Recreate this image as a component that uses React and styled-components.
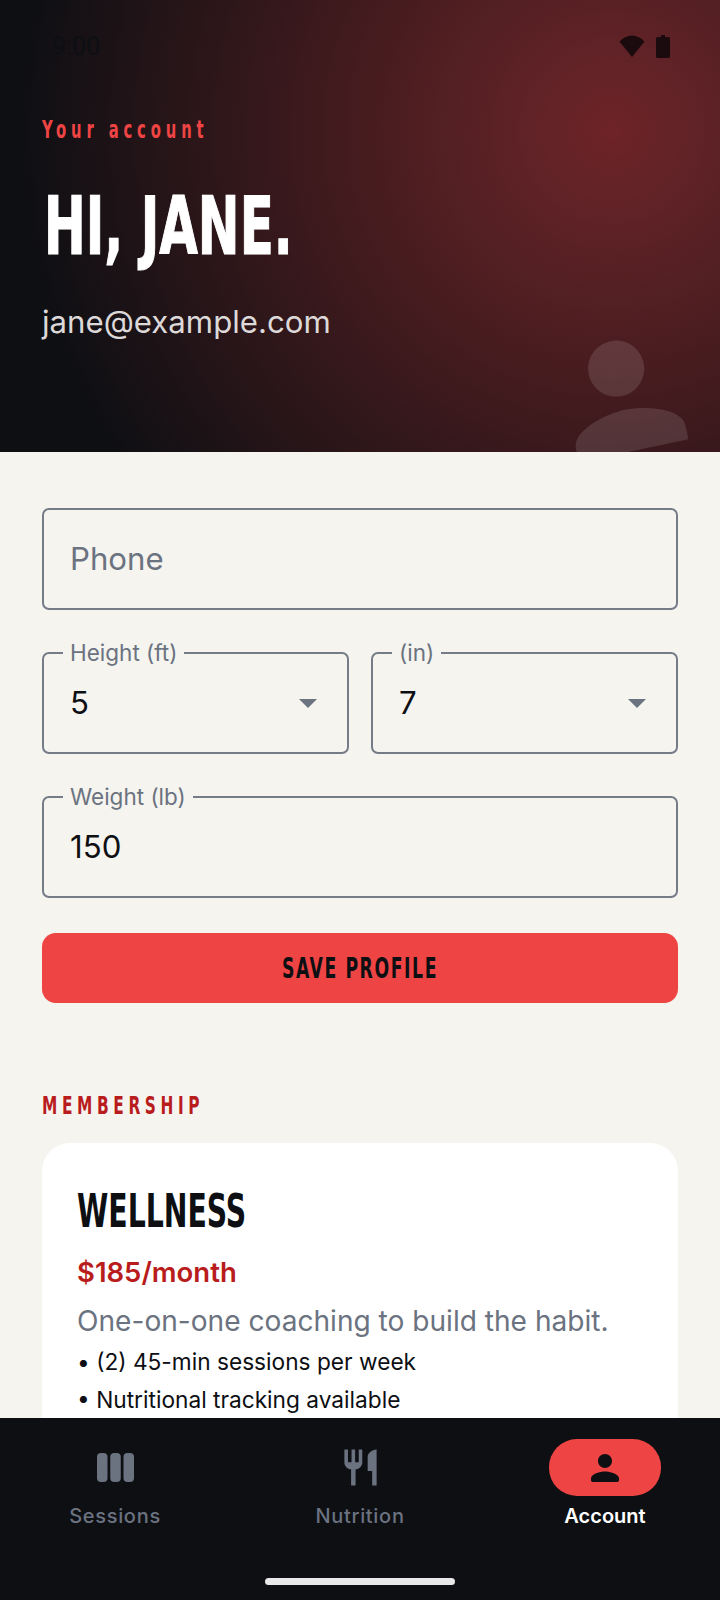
import React from "react";
import styled, { createGlobalStyle, css } from "styled-components";

// no Oswald here, so squeeze the condensed bold to the same proportions
const display = css`
  font-family: "DejaVu Sans Condensed", "DejaVu Sans", sans-serif;
  font-weight: 700;
  transform: scaleX(0.685);
  transform-origin: left center;
`;

const App = () => {
  return (
    <Screen>
      <GlobalStyle />
      <Scroller>
        <Hero>
          <Watermark viewBox="0 0 24 24">
            <path d="M12 12c2.210 0 4-1.790 4-4s-1.790-4-4-4-4 1.790-4 4 1.790 4 4 4zm0 2c-2.670 0-8 1.340-8 4v2h16v-2c0-2.660-5.330-4-8-4z" />
          </Watermark>
          <StatusBar>
            <Clock>9:00</Clock>
            <StatusIcons>
              <svg width="26" height="22" viewBox="0 0 26 22">
                <path d="M13 22 0.5 6.500C4 3 8.200 0.600 13 0.600S22 3 25.500 6.500z" />
              </svg>
              <svg width="14" height="23" viewBox="0 0 14 23">
                <path d="M5 0h4v2h3.500c.8 0 1.500.7 1.500 1.500V21.500c0 .8-.7 1.500-1.500 1.500h-11C.7 23 0 22.300 0 21.500V3.500C0 2.700.7 2 1.500 2H5z" />
              </svg>
            </StatusIcons>
          </StatusBar>
          <Eyebrow>Your account</Eyebrow>
          <Greeting>HI, JANE.</Greeting>
          <Email>jane@example.com</Email>
        </Hero>

        <Content>
          <Form>
            <Field>
              <Value $placeholder>Phone</Value>
            </Field>
            <TwoCols>
              <Field>
                <FieldLabel>Height (ft)</FieldLabel>
                <Value>5</Value>
                <Caret />
              </Field>
              <Field>
                <FieldLabel>(in)</FieldLabel>
                <Value>7</Value>
                <Caret />
              </Field>
            </TwoCols>
            <Field>
              <FieldLabel>Weight (lb)</FieldLabel>
              <Value>150</Value>
            </Field>
            <SaveButton>
              <span>SAVE PROFILE</span>
            </SaveButton>
          </Form>

          <SectionTitle>MEMBERSHIP</SectionTitle>
          <Card>
            <PlanName>WELLNESS</PlanName>
            <Price>$185/month</Price>
            <Blurb>One-on-one coaching to build the habit.</Blurb>
            <Perk>• (2) 45-min sessions per week</Perk>
            <Perk>• Nutritional tracking available</Perk>
          </Card>
        </Content>
      </Scroller>

      <BottomNav>
        <Tabs>
          <Tab>
            <IconSlot>
              <svg width="37" height="29" viewBox="0 0 37 29">
                <rect x="0" y="0" width="10.500" height="29" rx="4" />
                <rect x="13.250" y="0" width="10.500" height="29" rx="4" />
                <rect x="26.500" y="0" width="10.500" height="29" rx="4" />
              </svg>
            </IconSlot>
            <TabLabel>Sessions</TabLabel>
          </Tab>
          <Tab>
            <IconSlot>
              <svg width="43" height="43" viewBox="0 0 24 24">
                <path d="M11 9H9V2H7v7H5V2H3v7c0 2.120 1.660 3.840 3.750 3.970V22h2.500v-9.030C11.340 12.840 13 11.120 13 9V2h-2v7zm5-3v8h2.500v8H21V2c-2.760 0-5 2.240-5 4z" />
              </svg>
            </IconSlot>
            <TabLabel>Nutrition</TabLabel>
          </Tab>
          <Tab $active>
            <IconSlot $active>
              <svg width="42" height="42" viewBox="0 0 24 24">
                <path d="M12 12c2.210 0 4-1.790 4-4s-1.790-4-4-4-4 1.790-4 4 1.790 4 4 4zm0 2c-2.670 0-8 1.340-8 4v1c0 .550.450 1 1 1h14c.550 0 1-.450 1-1v-1c0-2.660-5.330-4-8-4z" />
              </svg>
            </IconSlot>
            <TabLabel $active>Account</TabLabel>
          </Tab>
        </Tabs>
        <HomeBar />
      </BottomNav>
    </Screen>
  );
};

const GlobalStyle = createGlobalStyle`
  html, body {
    margin: 0;
    padding: 0;
    background: #f5f4ef;
  }
  * {
    box-sizing: border-box;
  }
`;

const Screen = styled.div`
  width: 720px;
  height: 1600px;
  display: flex;
  flex-direction: column;
  overflow: hidden;
  font-family: Inter, sans-serif;
  background: #f5f4ef;
`;

const Scroller = styled.div`
  flex: 1;
  min-height: 0;
  overflow: hidden;
`;

//
//Header Area
//
const Hero = styled.header`
  position: relative;
  height: 452px;
  overflow: hidden;
  background: radial-gradient(
    circle 600px at 85% 29%,
    #6e2328 0%,
    #622327 12%,
    #431b1e 45%,
    #0d0f13 100%
  );
`;

const Watermark = styled.svg`
  position: absolute;
  right: 14px;
  bottom: -28px;
  width: 168px;
  height: 168px;
  transform: rotate(-12deg);
  fill: rgba(255, 255, 255, 0.12);
`;

const StatusBar = styled.div`
  height: 92px;
  padding: 0 50px 0 52px;
  display: flex;
  align-items: center;
  justify-content: space-between;
`;

const Clock = styled.span`
  font-family: Roboto, sans-serif;
  font-size: 25px;
  color: #0d0f13;
`;

const StatusIcons = styled.div`
  display: flex;
  align-items: center;
  gap: 11px;

  svg {
    fill: #1c0b0e;
  }
`;

const Eyebrow = styled.div`
  ${display}
  margin: 23px 0 0 42px;
  font-size: 24px;
  line-height: 30px;
  letter-spacing: 7.100px;
  color: #ef4444;
`;

const Greeting = styled.h1`
  ${display}
  margin: 31px 0 0 44px;
  font-size: 81px;
  line-height: 100px;
  color: #fff;
  -webkit-text-stroke: 1.200px #fff;
`;

const Email = styled.div`
  margin: 26px 0 0 42px;
  font-size: 31.200px;
  line-height: 40px;
  color: #ddd9d9;
`;

//
//Form
//
const Content = styled.main`
  padding: 56px 42px 0;
`;

const Form = styled.div`
  display: flex;
  flex-direction: column;
  gap: 42px;
`;

const TwoCols = styled.div`
  display: grid;
  grid-template-columns: 1fr 1fr;
  gap: 22px;
`;

const Field = styled.div`
  position: relative;
  height: 102px;
  padding: 0 26px;
  display: flex;
  align-items: center;
  border: 2px solid #757b87;
  border-radius: 7px;
`;

const FieldLabel = styled.span`
  position: absolute;
  top: -14px;
  left: 19px;
  padding: 0 7px;
  font-size: 22.500px;
  line-height: 26px;
  color: #6b7280;
  background: #f5f4ef;
`;

const Value = styled.span`
  font-size: 31.200px;
  color: ${(props) => (props.$placeholder ? "#6b7280" : "#0d0f13")};
`;

const Caret = styled.span`
  margin-left: auto;
  margin-right: 4px;
  width: 0;
  height: 0;
  border-left: 9px solid transparent;
  border-right: 9px solid transparent;
  border-top: 9px solid #6b7280;
`;

const SaveButton = styled.button`
  height: 70px;
  margin-top: -7px;
  border: none;
  border-radius: 14px;
  background: #ef4444;
  color: #0d0f13;

  span {
    ${display}
    display: inline-block;
    transform-origin: center;
    font-size: 28px;
    letter-spacing: 2.300px;
  }
`;

//
//Membership
//
const SectionTitle = styled.h2`
  ${display}
  margin: 91px 0 25px;
  font-size: 25px;
  line-height: 24px;
  letter-spacing: 6.700px;
  color: #b91c1c;
`;

const Card = styled.section`
  padding: 46px 35px 36px;
  border-radius: 28px;
  background: #fff;
`;

const PlanName = styled.div`
  ${display}
  font-size: 46px;
  line-height: 44px;
  color: #0d0f13;
`;

const Price = styled.div`
  margin-top: 21px;
  font-weight: 600;
  font-size: 27.500px;
  line-height: 36px;
  color: #b91c1c;
`;

const Blurb = styled.p`
  margin: 11px 0 0;
  font-size: 28.100px;
  line-height: 40px;
  color: #6b7280;
`;

const Perk = styled.div`
  font-size: 22.700px;
  line-height: 38px;
  color: #0d0f13;

  ${Blurb} + & {
    margin-top: 2px;
  }
`;

//
//Bottom navigation
//
const BottomNav = styled.nav`
  flex: none;
  height: 182px;
  background: #0d0f13;
  display: flex;
  flex-direction: column;
  align-items: center;
`;

const Tabs = styled.div`
  width: 100%;
  padding-top: 21px;
  display: grid;
  grid-template-columns: repeat(3, 245px);
  justify-content: center;
`;

const Tab = styled.div`
  display: flex;
  flex-direction: column;
  align-items: center;
  gap: 5px;
`;

const IconSlot = styled.div`
  width: 112px;
  height: 57px;
  display: flex;
  align-items: center;
  justify-content: center;
  border-radius: 28px;
  background: ${(props) => (props.$active ? "#ef4444" : "transparent")};

  svg {
    fill: ${(props) => (props.$active ? "#0d0f13" : "#6b7280")};
  }
`;

const TabLabel = styled.span`
  font-size: 20px;
  font-weight: ${(props) => (props.$active ? 600 : 500)};
  letter-spacing: ${(props) => (props.$active ? "0" : "0.7px")};
  line-height: 30px;
  color: ${(props) => (props.$active ? "#fff" : "#6b7280")};
`;

const HomeBar = styled.div`
  margin-top: 47px;
  width: 190px;
  height: 7px;
  border-radius: 4px;
  background: #e8e8e8;
`;

export default App;
